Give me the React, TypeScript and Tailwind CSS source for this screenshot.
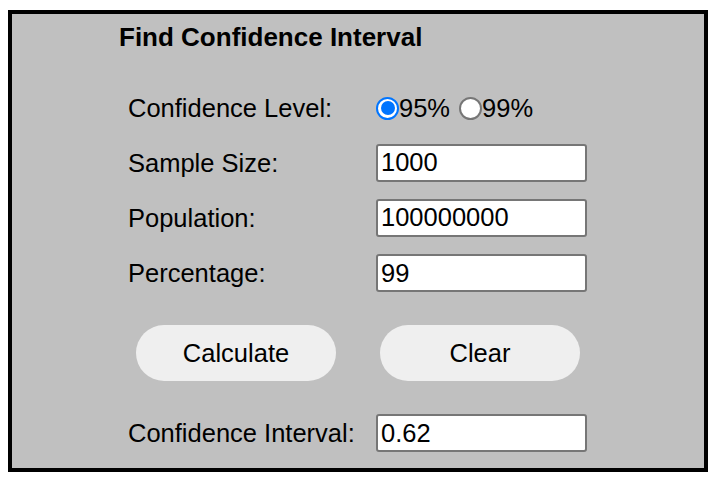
export default function App() {
  return (
    <div className="w-[718px] h-[484px] bg-white pt-[10px] pl-[8px] font-['Liberation_Sans',Arial,sans-serif] text-black">
      <div className="w-[700px] h-[462px] border-4 border-black bg-[#c0c0c0] flex flex-col">
        <h1 className="mt-[9px] ml-[107px] text-[26px] font-bold leading-[28px]">Find Confidence Interval</h1>

        <div className="mt-[30px] ml-[116px] flex flex-col">
          <div className="flex items-center h-[54px]">
            <span className="w-[248px] text-[25.5px] leading-[28px]">Confidence Level:</span>
            <div className="flex items-center text-[25.5px] leading-[28px]">
              <Radio checked />
              <span>95%</span>
              <span className="ml-[9px]"><Radio /></span>
              <span>99%</span>
            </div>
          </div>
          <Row label="Sample Size:" value="1000" h="h-[55px]" />
          <Row label="Population:" value="100000000" h="h-[55px]" />
          <Row label="Percentage:" value="99" h="h-[56px]" />

          <div className="mt-[24px] ml-[8px] flex gap-[44px]">
            <button className="w-[200px] h-[56px] rounded-full bg-[#efefef] text-[25.5px] leading-[28px]">Calculate</button>
            <button className="w-[200px] h-[56px] rounded-full bg-[#efefef] text-[25.5px] leading-[28px]">Clear</button>
          </div>

          <Row label="Confidence Interval:" value="0.62" h="h-[38px] mt-[33px]" />
        </div>
      </div>
    </div>
  );
}

function Row({ label, value, h }: { label: string; value: string; h: string }) {
  return (
    <div className={"flex items-center " + h}>
      <span className="w-[248px] text-[25.5px] leading-[28px]">{label}</span>
      <input
        readOnly
        defaultValue={value}
        className="w-[211px] h-[38px] border-2 border-[#767676] rounded-[3px] bg-white px-[3px] text-[25.5px] leading-[28px] outline-none"
      />
    </div>
  );
}

function Radio({ checked }: { checked?: boolean }) {
  if (checked) {
    return (
      <span className="w-[23px] h-[23px] rounded-full border-2 border-[#0075ff] bg-white flex items-center justify-center">
        <span className="w-[14px] h-[14px] rounded-full bg-[#0075ff]" />
      </span>
    );
  }
  return <span className="block w-[23px] h-[23px] rounded-full border-2 border-[#767676] bg-white" />;
}
